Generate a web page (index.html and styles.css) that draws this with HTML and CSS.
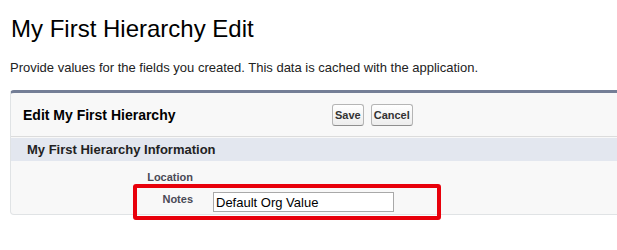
FILE: index.html
```html
<!DOCTYPE html>
<html lang="en">
<head>
    <meta charset="UTF-8">
    <meta name="viewport" content="width=device-width, initial-scale=1.0">
    <title>My First Hierarchy Edit</title>
    <link rel="stylesheet" href="styles.css">
</head>
<body>
    <h1 class="page-title">My First Hierarchy Edit</h1>
    <p class="page-intro">Provide values for the fields you created. This data is cached with the application.</p>

    <div class="page-block">
        <div class="block-header">
            <h2 class="block-title">Edit My First Hierarchy</h2>
            <div class="block-buttons">
                <button class="btn">Save</button>
                <button class="btn">Cancel</button>
            </div>
        </div>

        <h3 class="sub-header">My First Hierarchy Information</h3>

        <div class="block-section">
            <div class="field-row">
                <label class="field-label">Location</label>
                <div class="field-value"></div>
            </div>
            <div class="field-row highlighted">
                <label class="field-label" for="notes">Notes</label>
                <div class="field-value">
                    <input id="notes" class="text-input" type="text" value="Default Org Value">
                </div>
                <div class="callout"></div>
            </div>
        </div>
    </div>
</body>
</html>
```

FILE: styles.css
```css
html {
    overflow: hidden;
}
body {
    font-family: "Liberation Sans", Arial, sans-serif;
    margin: 0;
    padding: 0 0 0 10px;
    min-height: 250px;
    color: #000;
    background: #fff;
}
.page-title {
    font-size: 24px;
    font-weight: normal;
    margin: 15px 0 0 1px;
    line-height: 28px;
}
.page-intro {
    font-size: 13px;
    line-height: 15px;
    margin: 17px 0 0 0;
    color: #222;
}
.page-block {
    margin: 15px -20px 0 0;
    background: #f8f8f8;
    border: 1px solid #e0e3e5;
    border-top: 3px solid #747e96;
    border-radius: 4px;
}
.block-header {
    display: grid;
    grid-template-columns: 321px auto;
    align-items: center;
    height: 43px;
    border-bottom: 1px solid #dcdcdc;
}
.block-title {
    margin: 0;
    padding-left: 12px;
    font-size: 14px;
    font-weight: bold;
    color: #000;
}
.block-buttons {
    display: flex;
    gap: 7px;
}
.btn {
    font-family: "Liberation Sans", Arial, sans-serif;
    font-size: 11px;
    font-weight: bold;
    color: #333;
    height: 22px;
    padding: 0 2px;
    background: linear-gradient(#ffffff, #ededed);
    border: 1px solid #b5b5b5;
    border-bottom-color: #8f8f8f;
    border-radius: 3px;
}
.sub-header {
    margin: 1px 0 0 0;
    height: 23px;
    line-height: 23px;
    padding-left: 16px;
    background: #e3e7ef;
    font-size: 13px;
    font-weight: bold;
    color: #222;
}
.block-section {
    padding: 10px 0 2px 0;
}
.field-row {
    display: grid;
    grid-template-columns: 182px 1fr;
    column-gap: 20px;
}
.field-label {
    text-align: right;
    font-size: 11px;
    line-height: 13px;
    font-weight: bold;
    color: #4a4a56;
}
.field-row.highlighted {
    position: relative;
    margin-top: 5px;
    padding-top: 3px;
}
.field-row.highlighted .field-label {
    padding-top: 1px;
}
.text-input {
    box-sizing: border-box;
    width: 181px;
    height: 20px;
    margin: 0;
    padding: 1px 2px;
    border: 1px solid #a9a9a9;
    background: #fff;
    font-family: "Liberation Sans", Arial, sans-serif;
    font-size: 13px;
    color: #000;
    display: block;
}
.callout {
    position: absolute;
    z-index: 2;
    left: 122px;
    top: -5px;
    bottom: -8px;
    width: 308px;
    box-sizing: border-box;
    border: 4px solid #e8000b;
    border-radius: 3px;
}
```
